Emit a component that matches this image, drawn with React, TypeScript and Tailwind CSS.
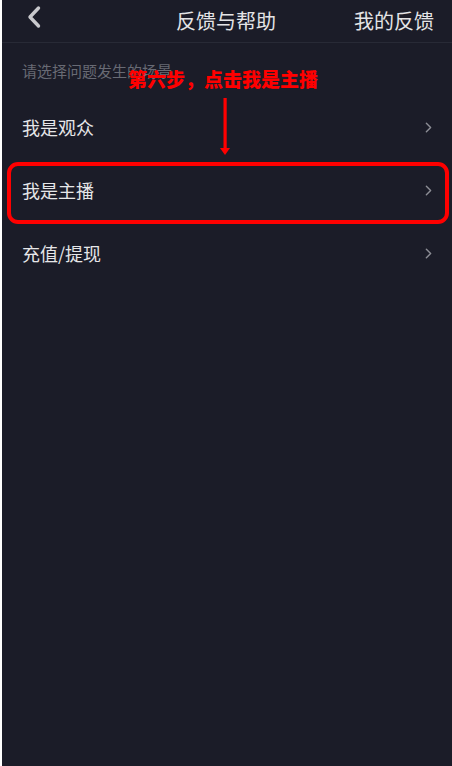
import { ChevronRight } from 'lucide-react'

const rows = ['我是观众', '我是主播', '充值/提现']

const cjk = { fontFamily: '"Noto Sans CJK SC", "Noto Sans", sans-serif' }

export default function App() {
  return (
    <div className="flex h-[766px] w-[452px] bg-white" style={cjk}>
      <div className="w-[2px] shrink-0 bg-white" />
      <div className="relative flex flex-1 flex-col overflow-hidden bg-[#1b1c28]">
        {/* header */}
        <div className="relative flex h-[43px] shrink-0 items-center border-b border-[#282a36]">
          <svg className="absolute left-[23px] top-[5px]" width="18" height="24" viewBox="0 0 18 24">
            <path d="M13.5 3 L5 12 L13.5 21" fill="none" stroke="#c9c9cd" strokeWidth="3.4" strokeLinecap="round" strokeLinejoin="round" />
          </svg>
          <div className="absolute left-[174px] text-[20px] leading-[28px] text-[#e4e4e6]">反馈与帮助</div>
          <div className="absolute right-[18px] text-[20px] leading-[28px] text-[#e4e4e6]">我的反馈</div>
        </div>

        <div className="px-[20px] pt-[18px] text-[15px] leading-[20px] text-[#686a74]">请选择问题发生的场景</div>

        <div className="mt-[15px] flex flex-col">
          {rows.map((r) => (
            <div key={r} className="flex h-[63px] items-center justify-between pl-[20px] pr-[15px]">
              <span className="text-[18px] text-[#e6e6e8]">{r}</span>
              <ChevronRight className="h-[17px] w-[17px] text-[#8c8d95]" strokeWidth={2} />
            </div>
          ))}
        </div>

        {/* annotation */}
        <div className="absolute left-[126px] top-[67px] text-[19px] font-black leading-[24px] text-[#ff0000]">
          第六步，点击我是主播
        </div>
        <svg className="absolute left-[215px] top-[98px]" width="16" height="60" viewBox="0 0 16 60">
          <rect x="6.5" y="0" width="3.2" height="52" fill="#ff0000" />
          <path d="M3 50 L13 50 L8 57 Z" fill="#ff0000" />
        </svg>
        <div className="absolute left-[5px] top-[162px] h-[62px] w-[442px] rounded-[11px] border-[4px] border-[#ff0000]" />
      </div>
    </div>
  )
}
